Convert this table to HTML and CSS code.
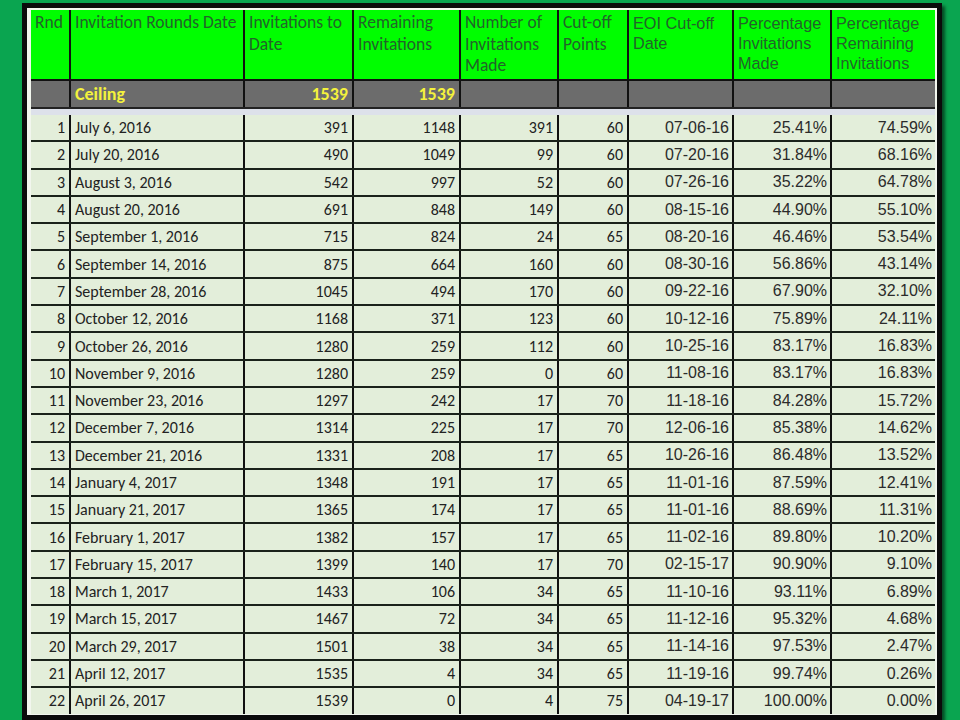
FILE: index.html
```html
<!DOCTYPE html>
<html lang="en">
<head>
<meta charset="utf-8">
<title>Invitation Rounds</title>
<link rel="stylesheet" href="styles.css">
</head>
<body>
<div class="frame">
<table class="rounds">
<colgroup>
<col class="c-rnd"><col class="c-date"><col class="c-todate"><col class="c-remain"><col class="c-made"><col class="c-points"><col class="c-eoi"><col class="c-pmade"><col class="c-prem">
</colgroup>
<thead>
<tr class="head">
<th>Rnd</th><th>Invitation Rounds Date</th><th>Invitations to Date</th><th>Remaining Invitations</th><th>Number of Invitations Made</th><th>Cut-off Points</th><th class="arial">EOI Cut-off Date</th><th class="arial">Percentage Invitations Made</th><th class="arial">Percentage Remaining Invitations</th>
</tr>
<tr class="ceiling">
<td></td><td class="label">Ceiling</td><td class="num">1539</td><td class="num">1539</td><td></td><td></td><td></td><td></td><td></td>
</tr>
<tr class="gap"><td colspan="9"></td></tr>
</thead>
<tbody>
<tr><td class="num">1</td><td>July 6, 2016</td><td class="num">391</td><td class="num">1148</td><td class="num">391</td><td class="num">60</td><td class="num arial">07-06-16</td><td class="num arial">25.41%</td><td class="num arial">74.59%</td></tr>
<tr><td class="num">2</td><td>July 20, 2016</td><td class="num">490</td><td class="num">1049</td><td class="num">99</td><td class="num">60</td><td class="num arial">07-20-16</td><td class="num arial">31.84%</td><td class="num arial">68.16%</td></tr>
<tr><td class="num">3</td><td>August 3, 2016</td><td class="num">542</td><td class="num">997</td><td class="num">52</td><td class="num">60</td><td class="num arial">07-26-16</td><td class="num arial">35.22%</td><td class="num arial">64.78%</td></tr>
<tr><td class="num">4</td><td>August 20, 2016</td><td class="num">691</td><td class="num">848</td><td class="num">149</td><td class="num">60</td><td class="num arial">08-15-16</td><td class="num arial">44.90%</td><td class="num arial">55.10%</td></tr>
<tr><td class="num">5</td><td>September 1, 2016</td><td class="num">715</td><td class="num">824</td><td class="num">24</td><td class="num">65</td><td class="num arial">08-20-16</td><td class="num arial">46.46%</td><td class="num arial">53.54%</td></tr>
<tr><td class="num">6</td><td>September 14, 2016</td><td class="num">875</td><td class="num">664</td><td class="num">160</td><td class="num">60</td><td class="num arial">08-30-16</td><td class="num arial">56.86%</td><td class="num arial">43.14%</td></tr>
<tr><td class="num">7</td><td>September 28, 2016</td><td class="num">1045</td><td class="num">494</td><td class="num">170</td><td class="num">60</td><td class="num arial">09-22-16</td><td class="num arial">67.90%</td><td class="num arial">32.10%</td></tr>
<tr><td class="num">8</td><td>October 12, 2016</td><td class="num">1168</td><td class="num">371</td><td class="num">123</td><td class="num">60</td><td class="num arial">10-12-16</td><td class="num arial">75.89%</td><td class="num arial">24.11%</td></tr>
<tr><td class="num">9</td><td>October 26, 2016</td><td class="num">1280</td><td class="num">259</td><td class="num">112</td><td class="num">60</td><td class="num arial">10-25-16</td><td class="num arial">83.17%</td><td class="num arial">16.83%</td></tr>
<tr><td class="num">10</td><td>November 9, 2016</td><td class="num">1280</td><td class="num">259</td><td class="num">0</td><td class="num">60</td><td class="num arial">11-08-16</td><td class="num arial">83.17%</td><td class="num arial">16.83%</td></tr>
<tr><td class="num">11</td><td>November 23, 2016</td><td class="num">1297</td><td class="num">242</td><td class="num">17</td><td class="num">70</td><td class="num arial">11-18-16</td><td class="num arial">84.28%</td><td class="num arial">15.72%</td></tr>
<tr><td class="num">12</td><td>December 7, 2016</td><td class="num">1314</td><td class="num">225</td><td class="num">17</td><td class="num">70</td><td class="num arial">12-06-16</td><td class="num arial">85.38%</td><td class="num arial">14.62%</td></tr>
<tr><td class="num">13</td><td>December 21, 2016</td><td class="num">1331</td><td class="num">208</td><td class="num">17</td><td class="num">65</td><td class="num arial">10-26-16</td><td class="num arial">86.48%</td><td class="num arial">13.52%</td></tr>
<tr><td class="num">14</td><td>January 4, 2017</td><td class="num">1348</td><td class="num">191</td><td class="num">17</td><td class="num">65</td><td class="num arial">11-01-16</td><td class="num arial">87.59%</td><td class="num arial">12.41%</td></tr>
<tr><td class="num">15</td><td>January 21, 2017</td><td class="num">1365</td><td class="num">174</td><td class="num">17</td><td class="num">65</td><td class="num arial">11-01-16</td><td class="num arial">88.69%</td><td class="num arial">11.31%</td></tr>
<tr><td class="num">16</td><td>February 1, 2017</td><td class="num">1382</td><td class="num">157</td><td class="num">17</td><td class="num">65</td><td class="num arial">11-02-16</td><td class="num arial">89.80%</td><td class="num arial">10.20%</td></tr>
<tr><td class="num">17</td><td>February 15, 2017</td><td class="num">1399</td><td class="num">140</td><td class="num">17</td><td class="num">70</td><td class="num arial">02-15-17</td><td class="num arial">90.90%</td><td class="num arial">9.10%</td></tr>
<tr><td class="num">18</td><td>March 1, 2017</td><td class="num">1433</td><td class="num">106</td><td class="num">34</td><td class="num">65</td><td class="num arial">11-10-16</td><td class="num arial">93.11%</td><td class="num arial">6.89%</td></tr>
<tr><td class="num">19</td><td>March 15, 2017</td><td class="num">1467</td><td class="num">72</td><td class="num">34</td><td class="num">65</td><td class="num arial">11-12-16</td><td class="num arial">95.32%</td><td class="num arial">4.68%</td></tr>
<tr><td class="num">20</td><td>March 29, 2017</td><td class="num">1501</td><td class="num">38</td><td class="num">34</td><td class="num">65</td><td class="num arial">11-14-16</td><td class="num arial">97.53%</td><td class="num arial">2.47%</td></tr>
<tr><td class="num">21</td><td>April 12, 2017</td><td class="num">1535</td><td class="num">4</td><td class="num">34</td><td class="num">65</td><td class="num arial">11-19-16</td><td class="num arial">99.74%</td><td class="num arial">0.26%</td></tr>
<tr><td class="num">22</td><td>April 26, 2017</td><td class="num">1539</td><td class="num">0</td><td class="num">4</td><td class="num">75</td><td class="num arial">04-19-17</td><td class="num arial">100.00%</td><td class="num arial">0.00%</td></tr>
</tbody>
</table>
</div>
</body>
</html>
```
FILE: styles.css
```css
html, body {
  margin: 0;
  padding: 0;
}
body {
  background: #0aa550;
  width: 960px;
  height: 720px;
  overflow: hidden;
}
.frame {
  margin: 3px 0 0 22px;
  border: 5px solid #0b0b0b;
  padding: 2px 2px 0 4px;
  box-sizing: content-box;
  width: 904px;
  height: 705px;
  background: #f2f6ee;
  box-shadow: 3px 3px 3px rgba(0, 0, 0, 0.55);
  overflow: hidden;
}
.rounds {
  table-layout: fixed;
  width: 904px;
  border-collapse: collapse;
  font-family: Calibri, Carlito, Lato, "Liberation Sans", sans-serif;
  font-size: 16px;
  color: #222;
}
.c-rnd { width: 39px; }
.c-date { width: 174px; }
.c-todate { width: 109px; }
.c-remain { width: 107px; }
.c-made { width: 98px; }
.c-points { width: 70px; }
.c-eoi { width: 105px; }
.c-pmade { width: 98px; }
.c-prem { width: 104px; }

.rounds th,
.rounds td {
  border-left: 2px solid #111;
  border-bottom: 2px solid #1a221a;
  padding: 0 4px;
  overflow: hidden;
  white-space: nowrap;
}
.rounds th:first-child,
.rounds td:first-child {
  border-left: none;
}
.head th {
  background: #00fe00;
  color: #22632a;
  font-family: Calibri, Carlito, Lato, "Liberation Sans", sans-serif;
  font-size: 17.5px;
  font-weight: normal;
  text-align: left;
  vertical-align: top;
  white-space: normal;
  line-height: 21.5px;
  height: 66px;
  padding-top: 2px;
  padding-bottom: 0;
  border-bottom: 2px solid #111;
}
.head th.arial {
  font-family: Arial, "Liberation Sans", sans-serif;
  font-size: 16.3px;
  line-height: 20px;
  padding-top: 3px;
}
.arial {
  font-family: Arial, "Liberation Sans", sans-serif;
  font-size: 16px;
  color: #2b2b2b;
}
.ceiling td {
  background: #6c6c6c;
  color: #f4f23c;
  font-weight: bold;
  font-size: 18px;
  height: 26px;
  border-bottom: 2px solid #222;
}
.ceiling td.label {
  padding-left: 4px;
}
.gap td {
  background: #dde1ea;
  height: 6px;
  padding: 0;
  border-bottom: none;
  border-left: none;
}
tbody td {
  background: #e3eeda;
  height: 25.3px;
  vertical-align: middle;
}
tbody tr:last-child td {
  border-bottom: none;
}
.num {
  text-align: right;
}
.rounds td.num {
  padding-right: 4px;
}
.rounds td.arial {
  padding-right: 3px;
}
```
